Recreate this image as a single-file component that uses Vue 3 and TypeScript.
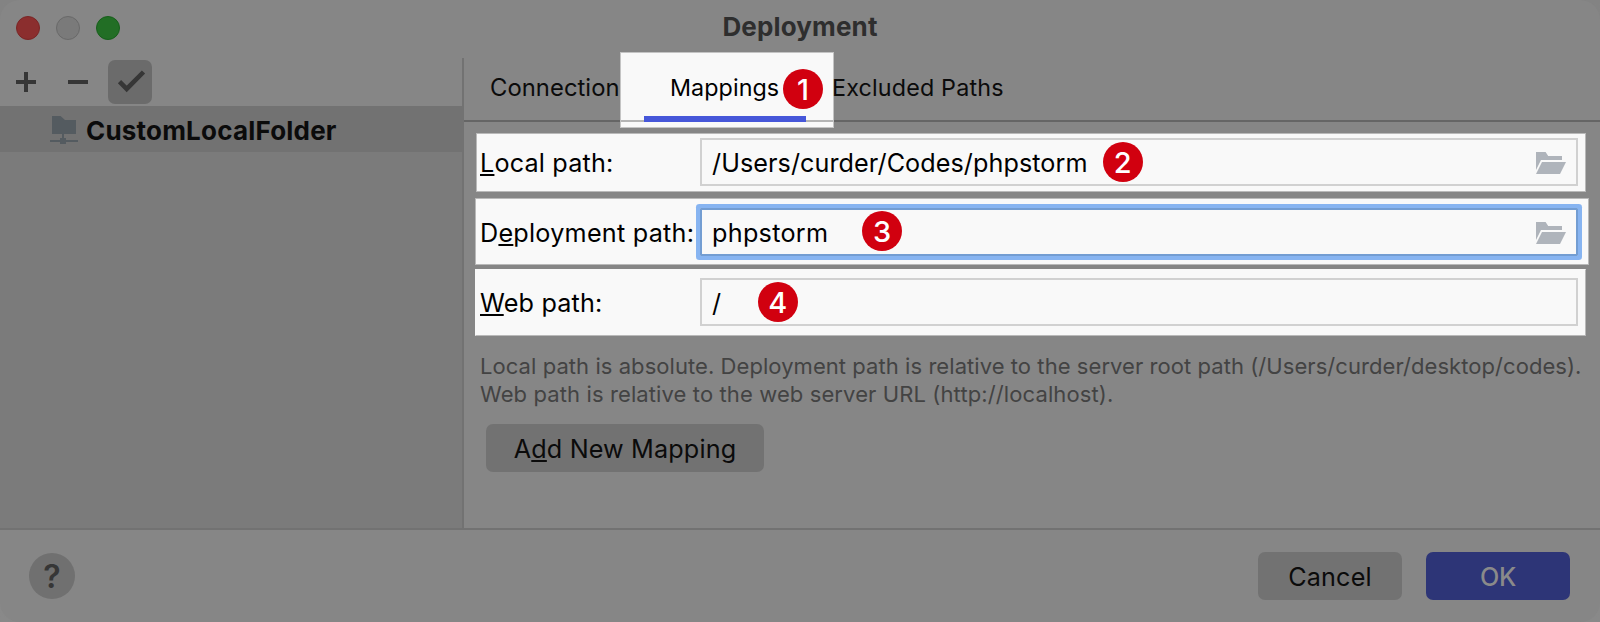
<script setup lang="ts">
interface Mapping {
  id: string
  before: string
  key: string
  after: string
  value: string
  browse: boolean
  step: number
}

const mappings: Mapping[] = [
  { id: 'local', before: '', key: 'L', after: 'ocal path:', value: '/Users/curder/Codes/phpstorm', browse: true, step: 2 },
  { id: 'deploy', before: 'D', key: 'e', after: 'ployment path:', value: 'phpstorm', browse: true, step: 3 },
  { id: 'web', before: '', key: 'W', after: 'eb path:', value: '/', browse: false, step: 4 },
]
</script>

<template>
  <div class="dialog">
    <header class="titlebar">
      <div class="lights">
        <span class="light red"></span>
        <span class="light idle"></span>
        <span class="light green"></span>
      </div>
      <h1 class="title">Deployment</h1>
    </header>

    <div class="body">
      <aside class="sidebar">
        <div class="toolbar">
          <svg class="tool plus" viewBox="0 0 20 20"><path d="M8 0h4v8h8v4h-8v8H8v-8H0V8h8z" /></svg>
          <svg class="tool minus" viewBox="0 0 20 20"><path d="M0 8h20v4H0z" /></svg>
          <span class="toggle">
            <svg viewBox="0 0 44 44"><path class="check" d="M11.5 21.7 18.7 28.9 35.5 12" /></svg>
          </span>
        </div>
        <div class="server">
          <svg class="server-icon" viewBox="0 0 28 28">
            <path d="M2 0h8.5L15 4h11v14H14v4h2v2h12v2H16v2h-6v-2H0v-2h10v-2h2v-4H2z" />
          </svg>
          <span class="server-name">CustomLocalFolder</span>
        </div>
      </aside>

      <main class="content">
        <nav class="tabs">
          <span class="tab connection">Connection</span>
          <span class="tab active"><span class="tab-text">Mappings</span><span class="badge">1</span></span>
          <span class="tab excluded">Excluded Paths</span>
        </nav>

        <div v-for="m in mappings" :key="m.id" class="row" :class="m.id">
          <label class="label">{{ m.before }}<span class="key">{{ m.key }}</span>{{ m.after }}</label>
          <div class="field">
            <span class="value">{{ m.value }}</span>
            <svg v-if="m.browse" class="folder" viewBox="0 0 30 22">
              <path d="M0 0h9.6l2.6 4H26v4H5L0 18z" />
              <path d="M6 10h24l-6 12H0z" />
            </svg>
          </div>
          <span class="badge">{{ m.step }}</span>
        </div>

        <p class="hint">
          <span class="line">Local path is absolute. Deployment path is relative to the server root path (/Users/curder/desktop/codes).</span>
          <span class="line second">Web path is relative to the web server URL (http://localhost).</span>
        </p>
        <button class="button add">A<span class="key">d</span>d New Mapping</button>
      </main>
    </div>

    <footer class="footer">
      <span class="help">?</span>
      <button class="button cancel">Cancel</button>
      <button class="button ok">OK</button>
    </footer>
  </div>
</template>

<style>
body {
  margin: 0;
  background: linear-gradient(#838383, #898989);
}
</style>

<style scoped>
.dialog {
  width: 1600px;
  height: 622px;
  box-sizing: border-box;
  display: flex;
  flex-direction: column;
  overflow: hidden;
  border-radius: 20px;
  background: #868686;
  color: #0b0b0b;
  font-family: Inter, "Liberation Sans", sans-serif;
  font-size: 25.2px;
  white-space: nowrap;
}
.titlebar {
  height: 58px;
  flex: none;
  display: grid;
  grid-template-columns: 1fr auto 1fr;
}
.lights {
  display: flex;
  gap: 16px;
  padding: 16px;
}
.light {
  width: 24px;
  height: 24px;
  box-sizing: border-box;
  border-radius: 50%;
}
.red { background: #8b2e2e; border: 1px solid #7a2626; }
.idle { background: #7a7a7a; border: 1px solid #696969; }
.green { background: #226e25; border: 1px solid #175f1b; }
.title {
  margin: 0;
  font-size: 26px;
  font-weight: 700;
  line-height: 53px;
  letter-spacing: 0.14px;
  color: #2e2e2e;
}
.body {
  height: 470px;
  flex: none;
  display: flex;
}
.sidebar {
  width: 462px;
  flex: none;
  background: #7b7b7b;
  border-right: 2px solid #727272;
}
.toolbar {
  height: 48px;
  display: flex;
  align-items: center;
  background: #868686;
  fill: #363636;
}
.tool {
  width: 20px;
  height: 20px;
}
.plus { margin-left: 16px; }
.minus { margin-left: 32px; }
.toggle {
  width: 44px;
  height: 44px;
  margin-left: 20px;
  border-radius: 7px;
  background: #6b6b6b;
}
.check {
  fill: none;
  stroke: #363636;
  stroke-width: 4.6;
}
.server {
  height: 46px;
  display: flex;
  align-items: center;
  padding-left: 50px;
  background: #727272;
}
.server-icon {
  width: 28px;
  height: 28px;
  margin-top: 2px;
  fill: #545b60;
}
.server-name {
  margin-left: 8px;
  font-size: 26px;
  font-weight: 700;
  line-height: 46px;
  padding-top: 3px;
  letter-spacing: 0.2px;
}
.content {
  flex: 1;
  min-width: 0;
}
.tabs {
  height: 62px;
  display: flex;
  border-bottom: 2px solid #656565;
  font-size: 23.3px;
  line-height: 59px;
}
.connection {
  width: 154px;
  padding-left: 26px;
  font-size: 23.8px;
  letter-spacing: 0.05px;
}
.active {
  position: relative;
  width: 136px;
  height: 58px;
  padding-left: 26px;
  color: #000;
  letter-spacing: 0.07px;
  border-bottom: 6px solid #4657d9;
}
/* Lit area behind the active tab, with the tab line running through it */
.active::before {
  content: "";
  position: absolute;
  left: -24px;
  top: -6px;
  width: 212px;
  height: 74px;
  border: 1px solid #c4c4c4;
  background: linear-gradient(#b4b4b4, #b4b4b4) 0 67px / 100% 2px no-repeat #f9f9f9;
}
.active::after {
  content: "";
  position: absolute;
  left: 0;
  top: 58px;
  width: 162px;
  height: 6px;
  background: #4657d9;
}
.tab-text {
  position: relative;
}
.excluded {
  padding-left: 26px;
  letter-spacing: 0.17px;
  position: relative;
}
.badge {
  position: absolute;
  z-index: 1;
  width: 40px;
  height: 40px;
  border-radius: 50%;
  background: #d1000f;
  color: #fff;
  font-size: 29px;
  font-weight: 500;
  line-height: 41px;
  letter-spacing: 0;
  text-align: center;
}
.active .badge {
  left: 139px;
  top: 10.5px;
}
.row {
  position: relative;
  box-sizing: border-box;
  display: flex;
  width: 1110px;
  margin-left: 12px;
  border: 1px solid #b9b9b9;
  background: #f9f9f9;
  color: #000;
}
.local {
  height: 59px;
  margin-top: 11px;
  padding: 4px 0 0 3px;
}
.deploy {
  width: 1114px;
  height: 67px;
  margin-top: 6px;
  margin-left: 11px;
  padding: 9px 0 0 4px;
}
.web {
  width: 1111px;
  height: 67px;
  margin-top: 4px;
  margin-left: 11px;
  padding: 8px 0 0 4px;
  border-top-color: #f9f9f9;
  border-left-color: #f9f9f9;
}
.label {
  width: 220px;
  flex: none;
  line-height: 50px;
  letter-spacing: 0.17px;
}
.deploy .label { letter-spacing: 0.24px; }
.key {
  text-decoration: underline;
  text-decoration-thickness: 2px;
  text-underline-offset: 2px;
  text-decoration-skip-ink: none;
}
.field {
  width: 878px;
  height: 48px;
  flex: none;
  box-sizing: border-box;
  display: flex;
  justify-content: space-between;
  padding: 0 10px;
  border: 2px solid #d1d1d1;
  line-height: 46px;
}
.deploy .field {
  border-color: #739dd2;
  box-shadow: 0 0 0 4px #87b4f1;
  border-radius: 1px;
}
.value { letter-spacing: 0.06px; }
.deploy .value { letter-spacing: 0.28px; }
.folder {
  width: 30px;
  height: 22px;
  margin-top: 12px;
  fill: #afb4bb;
}
.local .badge { left: 625.6px; top: 7.6px; }
.deploy .badge { left: 386px; top: 12px; }
.web .badge { left: 281.8px; top: 12px; }
.hint {
  margin: 16px 0 0 16px;
  color: #434343;
  font-size: 22px;
  line-height: 28px;
  letter-spacing: 0.06px;
}
.line { display: block; }
.second { letter-spacing: 0.11px; }
.button {
  display: block;
  height: 48px;
  padding: 0;
  border: 0;
  border-radius: 7px;
  background: #727272;
  color: #0b0b0b;
  font-family: inherit;
  font-size: 25.2px;
  line-height: 50px;
  letter-spacing: 0.14px;
}
.add {
  width: 278px;
  margin: 16px 0 0 22px;
}
.footer {
  height: 92px;
  flex: none;
  display: flex;
  align-items: center;
  padding: 0 30px 0 29px;
  border-top: 2px solid #727272;
}
.help {
  width: 46px;
  height: 46px;
  margin-right: auto;
  border-radius: 50%;
  background: #707070;
  color: #363636;
  font-size: 32px;
  font-weight: 600;
  line-height: 47px;
  text-align: center;
}
.cancel { width: 144px; }
.ok {
  width: 144px;
  margin-left: 24px;
  background: #2d3577;
  color: #8a8a8a;
  font-weight: 500;
  letter-spacing: -0.3px;
}
</style>
